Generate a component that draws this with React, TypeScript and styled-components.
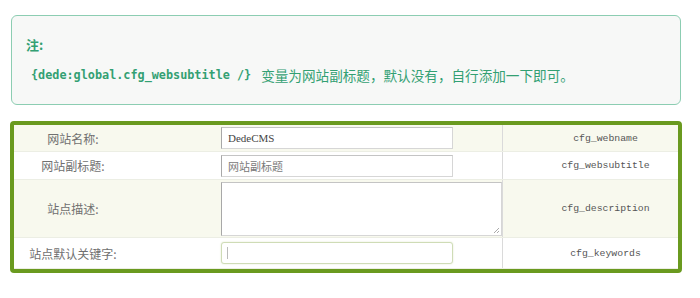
import React from "react";
import styled, { createGlobalStyle } from "styled-components";

const Global = createGlobalStyle`
  html, body { margin: 0; padding: 0; background: #ffffff; }
  body { font-family: "Noto Sans CJK SC", "Noto Sans", sans-serif; }
`;

const Page = styled.div`
  width: 700px;
  height: 298px;
  overflow: hidden;
  padding-top: 15px;
  box-sizing: border-box;
`;

const Note = styled.div`
  margin-left: 11px;
  width: 670px;
  height: 90px;
  box-sizing: border-box;
  border: 1px solid #8ccdb2;
  border-radius: 6px;
  background: #f7f8f7;
  padding: 19px 0 0 14px;
  display: flex;
  flex-direction: column;
  gap: 10px;
  color: #33a073;
`;

const NoteTitle = styled.div`
  font-family: "Noto Sans CJK SC", sans-serif;
  font-weight: 700;
  font-size: 13px;
  line-height: 20px;
`;

const NoteLine = styled.div`
  display: flex;
  align-items: center;
  gap: 10px;
  padding-left: 5px;
  line-height: 20px;
  white-space: nowrap;
`;

const Code = styled.span`
  font-family: "DejaVu Sans Mono", "Liberation Mono", monospace;
  font-weight: 700;
  font-size: 11.8px;
`;

const NoteText = styled.span`
  font-family: "Noto Sans CJK SC", sans-serif;
  font-size: 13.6px;
`;

const Table = styled.div`
  margin: 16px 0 0 10px;
  width: 672px;
  height: 152px;
  box-sizing: border-box;
  border: 4px solid #6a9a1f;
  border-radius: 4px;
  overflow: hidden;
  display: flex;
  flex-direction: column;
`;

const Row = styled.div<{ $h: number; $alt?: boolean }>`
  flex: none;
  height: ${(p) => p.$h}px;
  box-sizing: border-box;
  display: grid;
  grid-template-columns: 118px 370px 1fr;
  background: ${(p) => (p.$alt ? "#f8f9ee" : "#ffffff")};
  border-bottom: 1px solid #eceee4;
`;

const Label = styled.div`
  display: flex;
  align-items: center;
  justify-content: center;
  font-family: "Noto Sans CJK SC", serif;
  font-size: 12px;
  color: #707070;
`;

const Field = styled.div`
  display: flex;
  align-items: center;
  padding-left: 89px;
`;

const Input = styled.div<{ $placeholder?: boolean }>`
  width: 232px;
  height: 22px;
  box-sizing: border-box;
  border: 1px solid #d6d6d6;
  border-left-color: #a8a8a8;
  border-top-color: #c4c4c4;
  background: #fff;
  padding-left: 6px;
  display: flex;
  align-items: center;
  font-family: "Liberation Serif", "Noto Sans CJK SC", serif;
  font-size: 11px;
  color: ${(p) => (p.$placeholder ? "#7a7a7a" : "#444")};
`;

const Textarea = styled.div`
  position: relative;
  width: 282px;
  height: 54px;
  box-sizing: border-box;
  border: 1px solid #d6d6d6;
  border-left-color: #a8a8a8;
  border-top-color: #c4c4c4;
  background: #fff;
  margin-top: 1px;
`;

const Grip = styled.svg`
  position: absolute;
  right: 1px;
  bottom: 1px;
`;

const FocusInput = styled.div`
  width: 232px;
  height: 22px;
  box-sizing: border-box;
  border: 1px solid #cfdcb6;
  border-radius: 3px;
  box-shadow: 0 0 2px #dfe8cf;
  background: #fff;
  display: flex;
  align-items: center;
  padding-left: 5px;
`;

const Caret = styled.span`
  width: 1px;
  height: 12px;
  background: #bbb;
`;

const Var = styled.div`
  border-left: 1px solid #dadada;
  display: flex;
  align-items: center;
  justify-content: center;
  padding-left: 30px;
  font-family: "Liberation Mono", monospace;
  font-size: 9.8px;
  color: #555;
`;

export default function App() {
  return (
    <>
      <Global />
      <Page>
        <Note>
          <NoteTitle>注:</NoteTitle>
          <NoteLine>
            <Code>{"{dede:global.cfg_websubtitle /}"}</Code>
            <NoteText>变量为网站副标题，默认没有，自行添加一下即可。</NoteText>
          </NoteLine>
        </Note>
        <Table>
          <Row $h={27} $alt>
            <Label>网站名称:</Label>
            <Field>
              <Input>DedeCMS</Input>
            </Field>
            <Var>cfg_webname</Var>
          </Row>
          <Row $h={28}>
            <Label>网站副标题:</Label>
            <Field>
              <Input $placeholder>网站副标题</Input>
            </Field>
            <Var>cfg_websubtitle</Var>
          </Row>
          <Row $h={58} $alt>
            <Label>站点描述:</Label>
            <Field>
              <Textarea>
                <Grip width="7" height="7" viewBox="0 0 7 7">
                  <path d="M6 1 L1 6 M6 4 L4 6" stroke="#aaa" strokeWidth="1" />
                </Grip>
              </Textarea>
            </Field>
            <Var>cfg_description</Var>
          </Row>
          <Row $h={31}>
            <Label>站点默认关键字:</Label>
            <Field>
              <FocusInput>
                <Caret />
              </FocusInput>
            </Field>
            <Var>cfg_keywords</Var>
          </Row>
        </Table>
      </Page>
    </>
  );
}
